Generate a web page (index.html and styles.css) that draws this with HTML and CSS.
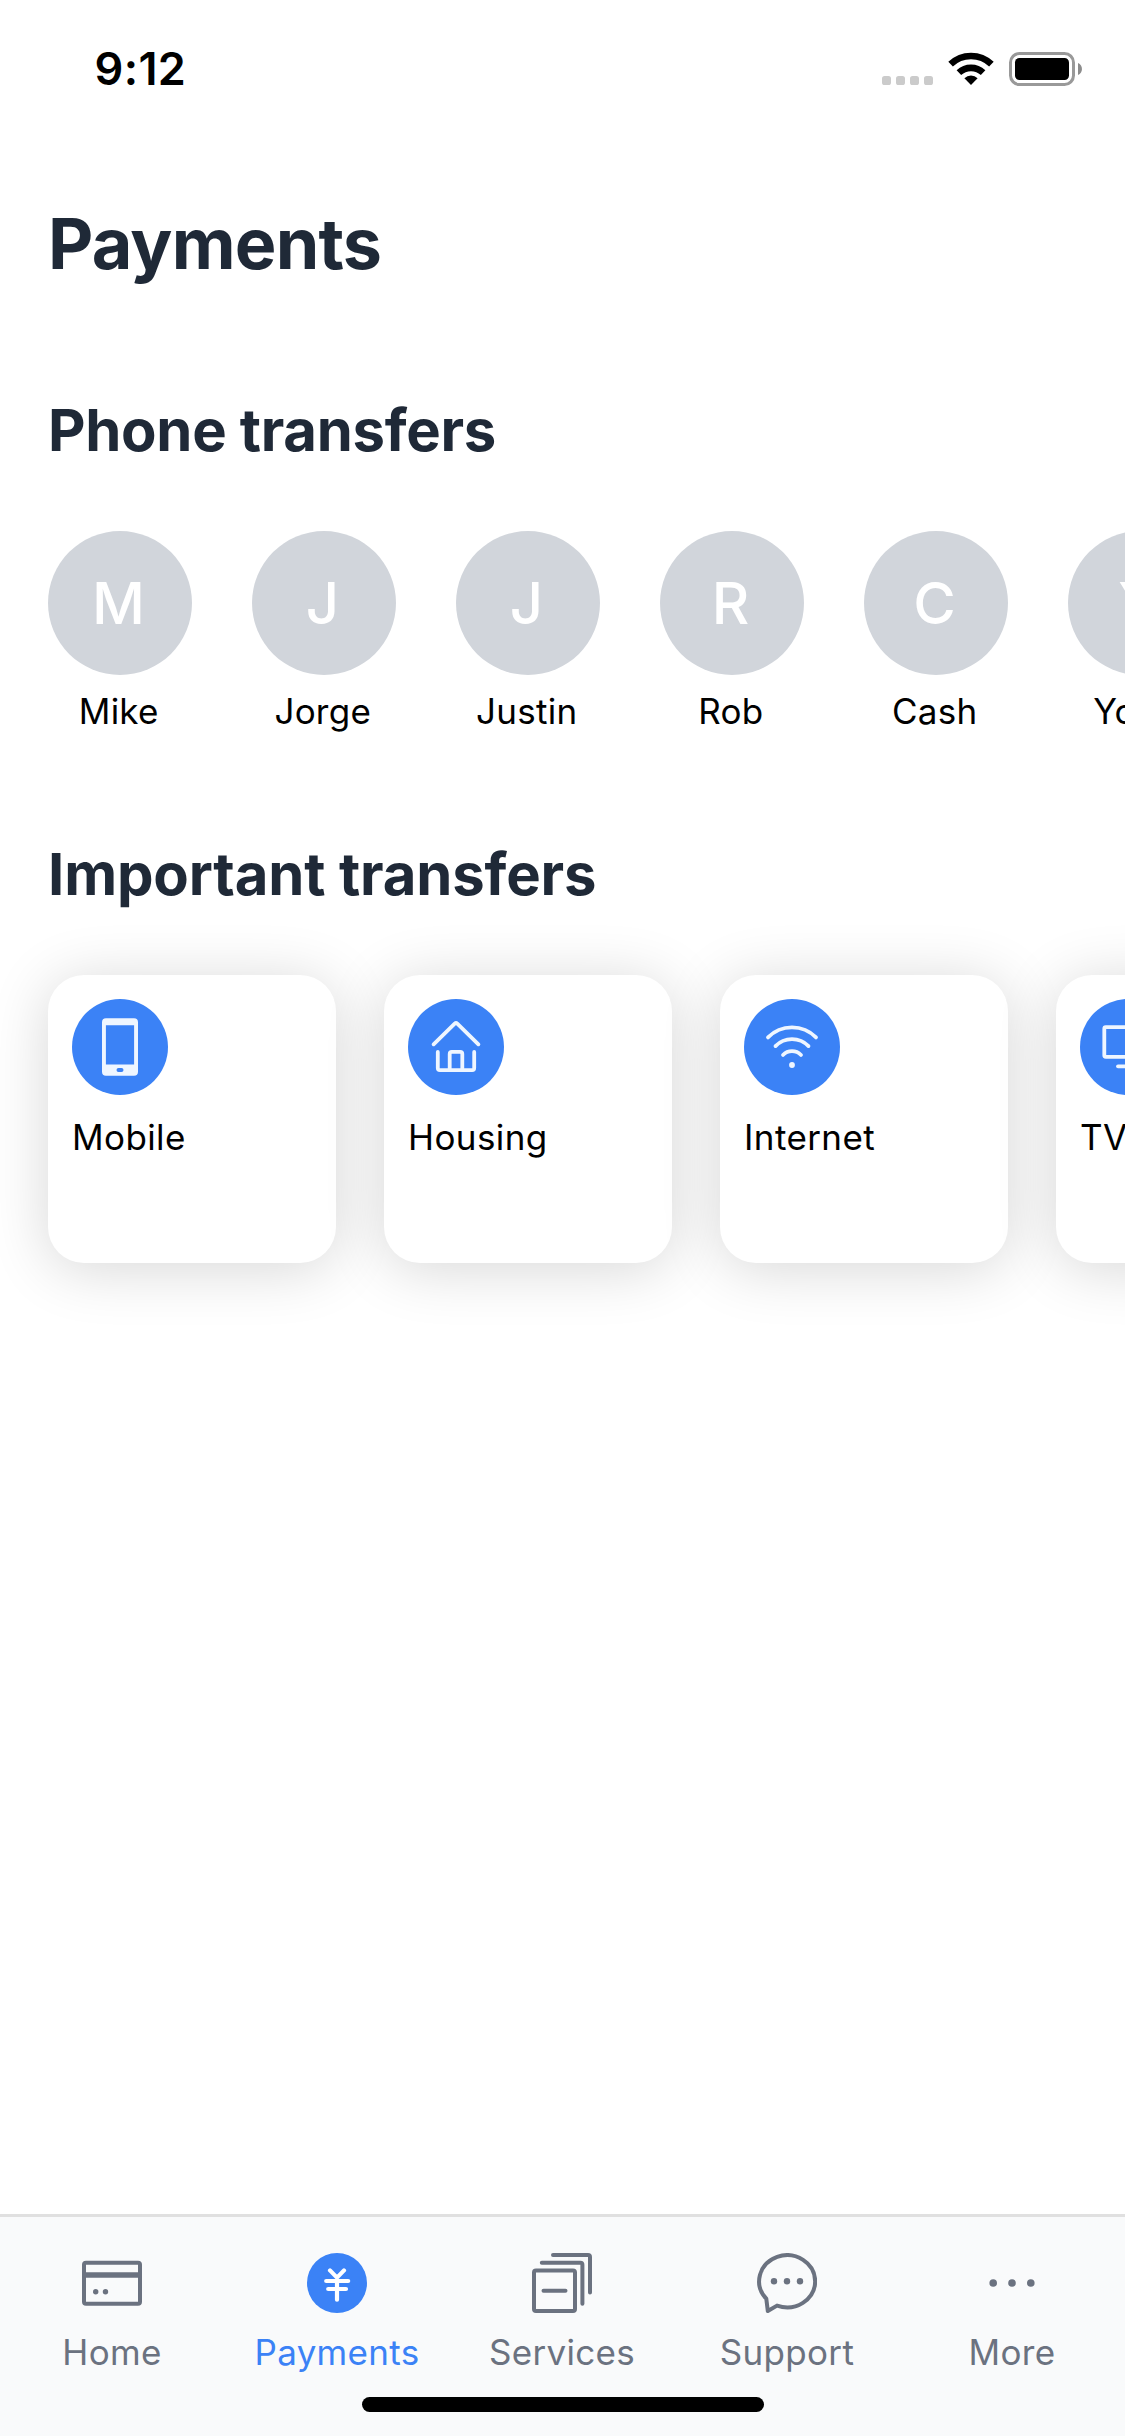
FILE: index.html
```html
<!DOCTYPE html>
<html lang="en">
<head>
<meta charset="utf-8">
<title>Payments</title>
<link rel="stylesheet" href="styles.css">
</head>
<body>
<div class="screen">
  <header class="status">
    <span class="time">9:12</span>
    <div class="indicators">
      <svg class="signal" width="51" height="9" viewBox="0 0 51 9" fill="#cbcbcb"><rect width="9" height="9" rx="2.6"/><rect x="14" width="9" height="9" rx="2.6"/><rect x="28" width="9" height="9" rx="2.6"/><rect x="42" width="9" height="9" rx="2.6"/></svg>
      <svg class="wifi" width="46" height="33" viewBox="0 0 46 33">
        <path d="M2.6 12.2A29.5 29.5 0 0 1 43.4 12.2" fill="none" stroke="#000" stroke-width="6.6"/>
        <path d="M10.9 20.7A17.6 17.6 0 0 1 35.1 20.7" fill="none" stroke="#000" stroke-width="6.6"/>
        <path d="M16.4 26.2A9.6 9.6 0 0 1 29.6 26.2L23 33Z"/>
      </svg>
      <svg class="battery" width="73" height="34" viewBox="0 0 73 34">
        <rect x="1.5" y="1.5" width="63" height="31" rx="9" fill="none" stroke="#999" stroke-width="3"/>
        <rect x="6" y="6" width="54" height="22" rx="4.5"/>
        <path d="M69 11C74.300 13.300 74.300 20.700 69 23Z" fill="#8c8c8c"/>
      </svg>
    </div>
  </header>

  <main class="content">
    <h1 class="title">Payments</h1>

    <section class="section">
      <h2 class="heading heading-phone">Phone transfers</h2>
      <div class="contacts">
        <div class="contact"><div class="avatar">M</div><div class="name">Mike</div></div>
        <div class="contact"><div class="avatar">J</div><div class="name">Jorge</div></div>
        <div class="contact"><div class="avatar">J</div><div class="name">Justin</div></div>
        <div class="contact"><div class="avatar">R</div><div class="name">Rob</div></div>
        <div class="contact"><div class="avatar">C</div><div class="name">Cash</div></div>
        <div class="contact"><div class="avatar">Y</div><div class="name">Yoshi</div></div>
      </div>
    </section>

    <section class="section section-important">
      <h2 class="heading">Important transfers</h2>
      <div class="cards">
        <div class="card">
          <div class="badge"><svg width="60" height="60" viewBox="0 0 60 60"><path fill="#eff6ff" fill-rule="evenodd" d="M16 1.200H44a4 4 0 0 1 4 4V54.800a4 4 0 0 1-4 4H16a4 4 0 0 1-4-4V5.200a4 4 0 0 1 4-4ZM15.900 8.200V47.400H44.100V8.200ZM28.500 51a2 2 0 0 0 0 4H31.500a2 2 0 0 0 0-4Z"/></svg></div>
          <div class="label">Mobile</div>
        </div>
        <div class="card">
          <div class="badge"><svg class="line" width="60" height="60" viewBox="0 0 60 60"><path d="M7.600 27.300 28.700 6.700Q30 5.500 31.300 6.700L52.400 27.300M11.800 35V51Q11.800 53.100 13.900 53.100H46.100Q48.200 53.100 48.200 51V35M23.700 52.500V37Q23.700 34.900 25.800 34.900H34.200Q36.300 34.900 36.300 37V52.500"/></svg></div>
          <div class="label">Housing</div>
        </div>
        <div class="card">
          <div class="badge"><svg class="line" width="60" height="60" viewBox="0 0 60 60"><path d="M6 20.400A33.800 33.800 0 0 1 54 20.400M13.500 29.100A23 23 0 0 1 46.500 29.100M21 38A12.500 12.500 0 0 1 39 38"/><circle cx="30" cy="48" r="2.900" fill="#eff6ff" stroke="none"/></svg></div>
          <div class="label">Internet</div>
        </div>
        <div class="card">
          <div class="badge"><svg class="line" width="60" height="60" viewBox="0 0 60 60"><rect x="6.300" y="10.200" width="47.400" height="29.600" rx="1.500"/><path d="M20 49.300H40"/></svg></div>
          <div class="label">TV</div>
        </div>
      </div>
    </section>
  </main>

  <nav class="tabs">
    <a class="tab">
      <svg width="60" height="60" viewBox="0 0 60 60" fill="none" stroke="currentColor" stroke-width="4"><rect x="2" y="9.700" width="56" height="41" rx="2"/><path d="M2 22H58" stroke-width="5.500"/><circle cx="13.700" cy="38.700" r="2.700" fill="currentColor" stroke="none"/><circle cx="23.500" cy="38.700" r="2.700" fill="currentColor" stroke="none"/></svg>
      <span class="tab-label">Home</span>
    </a>
    <a class="tab active">
      <svg width="60" height="60" viewBox="0 0 60 60"><circle cx="30" cy="30" r="30" fill="currentColor"/><path d="M23 17.400 30 24.600 37 17.400M30 24.600V46.700M19.200 28H41.200M21.200 36H39" fill="none" stroke="#fff" stroke-width="4.200" stroke-linecap="round" stroke-linejoin="round"/></svg>
      <span class="tab-label">Payments</span>
    </a>
    <a class="tab">
      <svg width="60" height="60" viewBox="0 0 60 60" fill="none" stroke="currentColor" stroke-width="4" stroke-linecap="round" stroke-linejoin="round"><rect x="2" y="17.400" width="41" height="40.600" rx="2"/><path d="M11.500 37.700H33.500M9.800 9.700H48.400Q50.400 9.700 50.400 11.700V50.800M21 2H56Q58 2 58 4V39.500"/></svg>
      <span class="tab-label">Services</span>
    </a>
    <a class="tab">
      <svg width="60" height="60" viewBox="0 0 60 60" fill="none" stroke="currentColor" stroke-width="4" stroke-linecap="round" stroke-linejoin="round"><path d="M9.300 45.700A28 26.100 0 1 1 20 52.600L10.800 58Z"/><g fill="currentColor" stroke="none"><circle cx="17" cy="28.200" r="3.200"/><circle cx="30" cy="28.200" r="3.200"/><circle cx="43" cy="28.200" r="3.200"/></g></svg>
      <span class="tab-label">Support</span>
    </a>
    <a class="tab">
      <svg width="60" height="60" viewBox="0 0 60 60" fill="currentColor"><circle cx="11.200" cy="30" r="3.800"/><circle cx="30" cy="30" r="3.800"/><circle cx="48.800" cy="30" r="3.800"/></svg>
      <span class="tab-label">More</span>
    </a>
    <div class="home-indicator"></div>
  </nav>
</div>
</body>
</html>
```
FILE: styles.css
```css
* { box-sizing: border-box; }

body {
  margin: 0;
  background: #fff;
  color: #000;
  font-family: Inter, "Liberation Sans", sans-serif;
}

.screen {
  display: flex;
  flex-direction: column;
  width: 1125px;
  height: 2436px;
  overflow: hidden;
}

/* Status bar */
.status {
  display: flex;
  justify-content: space-between;
  align-items: flex-start;
  height: 132px;
  padding: 0 43px 0 94.5px;
}
.time {
  padding-top: 39px;
  font-size: 45px;
  line-height: 60px;
  font-weight: 600;
  letter-spacing: 0.4px;
}
.indicators {
  display: flex;
  align-items: flex-end;
  height: 86px;
}
.signal { margin: 0 15px 1px 0; }
.wifi { margin: 0 15px 1px 0; }

/* Content */
.content { flex: 1; padding-top: 58px; }
.title {
  margin: 0 48px;
  color: #1f2937;
  font-size: 70px;
  line-height: 108px;
  font-weight: 700;
  letter-spacing: -0.8px;
}
.section { padding-top: 90px; }
.section-important { padding-top: 97px; }
.heading {
  margin: 0 48px;
  color: #1f2937;
  font-size: 58px;
  line-height: 84px;
  font-weight: 700;
  letter-spacing: -0.15px;
}
.heading-phone { letter-spacing: -0.3px; }

.contacts {
  display: flex;
  gap: 60px;
  padding: 59px 48px 0;
}
.contact { flex: none; width: 144px; }
.avatar {
  display: flex;
  align-items: center;
  justify-content: center;
  width: 144px;
  height: 144px;
  padding-right: 3px;
  border-radius: 50%;
  background: #d1d5db;
  color: #fff;
  font-size: 58px;
  line-height: 84px;
  font-weight: 500;
}
.name {
  margin-top: 12px;
  padding-right: 2.5px;
  font-size: 35px;
  line-height: 48px;
  letter-spacing: 0.25px;
  text-align: center;
}

.cards {
  display: flex;
  gap: 48px;
  padding: 59px 48px 0;
}
.card {
  flex: none;
  width: 288px;
  height: 288px;
  padding: 24px;
  border-radius: 36px;
  background: #fff;
  box-shadow: 0 6px 60px rgba(0, 0, 0, 0.16);
}
.badge {
  display: flex;
  align-items: center;
  justify-content: center;
  width: 96px;
  height: 96px;
  border-radius: 50%;
  background: #3b82f6;
}
.line {
  fill: none;
  stroke: #eff6ff;
  stroke-width: 3.8;
  stroke-linecap: round;
  stroke-linejoin: round;
}
.label {
  margin-top: 18px;
  font-size: 35px;
  line-height: 48px;
  letter-spacing: 0.4px;
}

/* Tab bar */
.tabs {
  position: relative;
  display: flex;
  height: 222px;
  padding-right: 1px;
  border-top: 3px solid #e0e0e0;
  background: #f9fafb;
}
.tab {
  display: flex;
  flex: none;
  flex-direction: column;
  align-items: center;
  width: 225px;
  padding: 36px 1px 0 0;
  color: #6b7280;
}
.tab svg { display: block; flex: none; }
.active { color: #3b82f6; }
.tab-label {
  margin-top: 15px;
  font-size: 35px;
  line-height: 48px;
  letter-spacing: 0.3px;
}
.home-indicator {
  position: absolute;
  left: 362px;
  bottom: 24px;
  width: 402px;
  height: 15px;
  border-radius: 8px;
  background: #000;
}
```
